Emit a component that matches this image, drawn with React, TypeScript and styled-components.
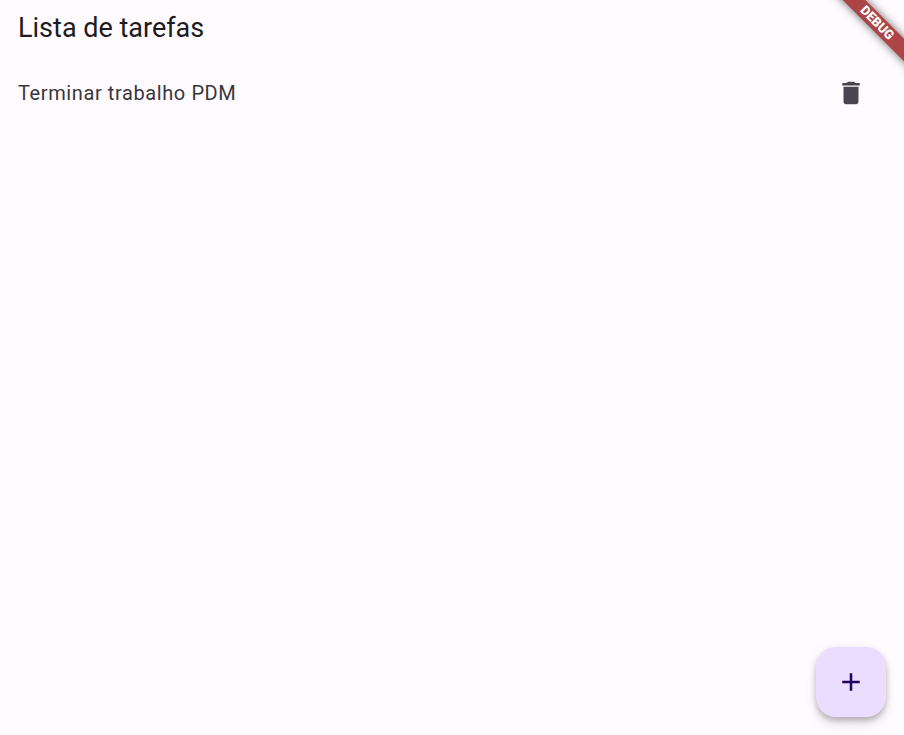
import React from "react";
import styled, { createGlobalStyle } from "styled-components";

const GlobalStyle = createGlobalStyle`
  * { box-sizing: border-box; }
  body {
    margin: 0;
    background: #fffbff;
    font-family: Roboto, sans-serif;
    color: #1c1b1e;
  }
`;

const Screen = styled.div`
  position: relative;
  min-height: 100vh;
  overflow: hidden;
`;

const AppBar = styled.header`
  display: flex;
  align-items: center;
  height: 56px;
  padding: 0 18px;
`;

const Title = styled.h1`
  margin: 0;
  font-size: 27px;
  font-weight: 400;
  line-height: 36px;
`;

const TaskList = styled.ul`
  margin: 0;
  padding: 0;
  list-style: none;
`;

const TaskRow = styled.li`
  display: flex;
  align-items: center;
  justify-content: space-between;
  height: 73px;
  padding: 0 24px 0 18px;
`;

const TaskName = styled.span`
  color: #38363b;
  font-size: 20px;
  line-height: 30px;
  letter-spacing: 0.6px;
`;

const DeleteButton = styled.button`
  display: grid;
  place-items: center;
  width: 58px;
  height: 58px;
  padding: 0;
  border: 0;
  border-radius: 50%;
  background: none;
  color: #48454e;
  cursor: pointer;
`;

const AddButton = styled.button`
  position: fixed;
  right: 18px;
  bottom: 18px;
  display: grid;
  place-items: center;
  width: 70px;
  height: 70px;
  padding: 0;
  border: 0;
  border-radius: 20px;
  background: #eaddff;
  color: #22005d;
  box-shadow: 0 4px 6px -1px rgba(0, 0, 0, 0.2), 0 7px 12px rgba(0, 0, 0, 0.12),
    0 1px 10px rgba(0, 0, 0, 0.08);
  cursor: pointer;
`;

const DebugRibbon = styled.div`
  position: absolute;
  top: 15px;
  right: -33px;
  width: 120px;
  height: 16px;
  transform: rotate(45deg);
  background: #ad4546;
  color: #fff;
  font-size: 13px;
  font-weight: 900;
  line-height: 16px;
  text-align: center;
  box-shadow: 0 0 10px rgba(0, 0, 0, 0.6);
  pointer-events: none;
`;

const tasks = ["Terminar trabalho PDM"];

export default function App() {
  return (
    <Screen>
      <GlobalStyle />
      <AppBar>
        <Title>Lista de tarefas</Title>
      </AppBar>
      <TaskList>
        {tasks.map((task) => (
          <TaskRow key={task}>
            <TaskName>{task}</TaskName>
            <DeleteButton aria-label={`Excluir ${task}`}>
              <svg width="30" height="30" viewBox="0 0 24 24" fill="currentColor">
                <path d="M6 19c0 1.100.9 2 2 2h8c1.100 0 2-.9 2-2V7H6v12zM19 4h-3.500l-1-1h-5l-1 1H5v2h14V4z" />
              </svg>
            </DeleteButton>
          </TaskRow>
        ))}
      </TaskList>
      <AddButton aria-label="Adicionar tarefa">
        <svg width="30" height="30" viewBox="0 0 24 24" fill="currentColor">
          <path d="M19 13h-6v6h-2v-6H5v-2h6V5h2v6h6v2z" />
        </svg>
      </AddButton>
      <DebugRibbon>DEBUG</DebugRibbon>
    </Screen>
  );
}
